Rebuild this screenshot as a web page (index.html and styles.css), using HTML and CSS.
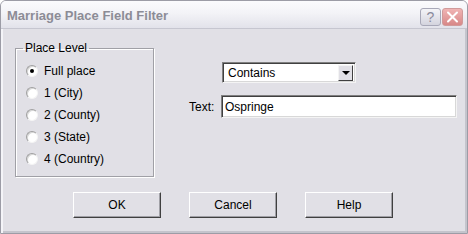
FILE: index.html
```html
<!DOCTYPE html>
<html lang="en">
<head>
    <meta charset="UTF-8">
    <meta name="viewport" content="width=device-width, initial-scale=1.0">
    <title>Marriage Place Field Filter</title>
    <link rel="stylesheet" href="styles.css">
</head>
<body>
    <div class="window">
        <div class="titlebar">
            <span class="title">Marriage Place Field Filter</span>
            <div class="caption-buttons">
                <span class="cap-btn cap-help">?</span>
                <span class="cap-btn cap-close">
                    <svg width="13" height="12" viewBox="0 0 13 12">
                        <path d="M2 1.5 L11 10.5 M11 1.5 L2 10.5" stroke="#fff" stroke-width="2" stroke-linecap="round"/>
                    </svg>
                </span>
            </div>
        </div>
        <div class="client">
            <div class="content">
                <fieldset class="group">
                    <legend>Place Level</legend>
                    <label class="radio-row"><input type="radio" name="level" checked> Full place</label>
                    <label class="radio-row"><input type="radio" name="level"> 1 (City)</label>
                    <label class="radio-row"><input type="radio" name="level"> 2 (County)</label>
                    <label class="radio-row"><input type="radio" name="level"> 3 (State)</label>
                    <label class="radio-row"><input type="radio" name="level"> 4 (Country)</label>
                </fieldset>
                <div class="filter-panel">
                    <span></span>
                    <div class="combo">
                        <span class="combo-text">Contains</span>
                        <span class="combo-btn"><span class="arrow"></span></span>
                    </div>
                    <label class="field-label" for="filterText">Text:</label>
                    <input type="text" id="filterText" class="text-input" value="Ospringe">
                </div>
            </div>
            <div class="button-row">
                <button class="btn">OK</button>
                <button class="btn">Cancel</button>
                <button class="btn">Help</button>
            </div>
        </div>
    </div>
</body>
</html>
```

FILE: styles.css
```css
body {
    margin: 0;
    font-family: "Liberation Sans", Arial, sans-serif;
    font-size: 12px;
    color: #000;
    background: #fff;
}
.window {
    width: 468px;
    height: 234px;
    box-sizing: border-box;
    background-color: #e1e0e6;
    border: 1px solid #9c9ca6;
    border-radius: 6px 6px 0 0;
    box-shadow: inset 2px 0 0 #f4f4f8, inset -2px -2px 0 #c4c4cc;
    overflow: hidden;
}
.titlebar {
    height: 28px;
    box-sizing: border-box;
    display: flex;
    align-items: center;
    justify-content: space-between;
    padding: 0 4px 0 6px;
    background: linear-gradient(#fbfbfd, #f3f3f7 45%, #e2e2ea);
    border-bottom: 1px solid #c6c6d0;
}
.title {
    font-weight: bold;
    font-size: 13px;
    color: #8c8c96;
    padding-top: 1px;
}
.caption-buttons {
    display: flex;
    gap: 1px;
    padding-top: 5px;
}
.cap-btn {
    width: 21px;
    height: 18px;
    box-sizing: border-box;
    border-radius: 3px;
    display: flex;
    align-items: center;
    justify-content: center;
}
.cap-help {
    border: 1px solid #a8a8b8;
    background: linear-gradient(#f4f4f8, #d4d4de);
    color: #8a8a9c;
    font-size: 14px;
}
.cap-close {
    border: 1px solid #d09a9a;
    background: linear-gradient(#f0b4b4, #d88888);
}
.client {
    padding: 12px 10px 0 14px;
}
.content {
    display: flex;
}
.group {
    width: 140px;
    height: 136px;
    box-sizing: border-box;
    margin: 0;
    padding: 5px 0 0 10px;
    border: 1px solid #a0a0a6;
    box-shadow: 1px 1px 0 #fff, inset 1px 1px 0 #fff;
}
.group legend {
    padding: 0 2px;
    margin-left: -3px;
    line-height: 14px;
}
.radio-row {
    display: flex;
    align-items: center;
    gap: 6px;
    height: 22px;
}
.radio-row input {
    appearance: none;
    margin: 0;
    width: 12px;
    height: 12px;
    border-radius: 50%;
    background: #fff;
    border: 1px solid;
    border-color: #a0a0a0 #f4f4f4 #f4f4f4 #a0a0a0;
    box-shadow: inset 1px 1px 0 #d8d8d8;
    position: relative;
}
.radio-row input:checked::after {
    content: "";
    position: absolute;
    left: 3px;
    top: 3px;
    width: 4px;
    height: 4px;
    border-radius: 50%;
    background: #000;
}
.filter-panel {
    margin: 21px 0 0 35px;
    display: grid;
    grid-template-columns: 32px 236px;
    row-gap: 12px;
    align-items: center;
    align-content: start;
}
.combo {
    width: 134px;
    height: 21px;
    box-sizing: border-box;
    margin-left: 1px;
    display: flex;
    align-items: center;
    justify-content: space-between;
    background: #fff;
    border: 1px solid;
    border-color: #808080 #f4f4f4 #f4f4f4 #808080;
    box-shadow: inset 1px 1px 0 #404040, inset -1px -1px 0 #d8d8d8;
    padding: 2px 2px 2px 5px;
}
.combo-btn {
    width: 15px;
    height: 16px;
    box-sizing: border-box;
    background: #e1e0e6;
    border: 1px solid;
    border-color: #f4f4f4 #404040 #404040 #f4f4f4;
    display: flex;
    align-items: center;
    justify-content: center;
}
.arrow {
    width: 0;
    height: 0;
    border-left: 4px solid transparent;
    border-right: 4px solid transparent;
    border-top: 4px solid #000;
}
.field-label {
    padding-top: 1px;
}
.text-input {
    width: 236px;
    height: 23px;
    box-sizing: border-box;
    margin: 0;
    padding: 1px 3px 0;
    font-family: inherit;
    font-size: 12px;
    background: #fff;
    border: 1px solid;
    border-color: #808080 #f4f4f4 #f4f4f4 #808080;
    box-shadow: inset 1px 1px 0 #404040, inset -1px -1px 0 #d8d8d8;
    outline: none;
}
.button-row {
    display: flex;
    gap: 28px;
    margin: 15px 0 0 58px;
}
.btn {
    width: 88px;
    height: 26px;
    padding: 0;
    font-family: inherit;
    font-size: 12px;
    color: #000;
    background: #e1e0e6;
    border: 1px solid;
    border-color: #fff #404040 #404040 #fff;
    box-shadow: inset -1px -1px 0 #a0a0a6;
}
```
